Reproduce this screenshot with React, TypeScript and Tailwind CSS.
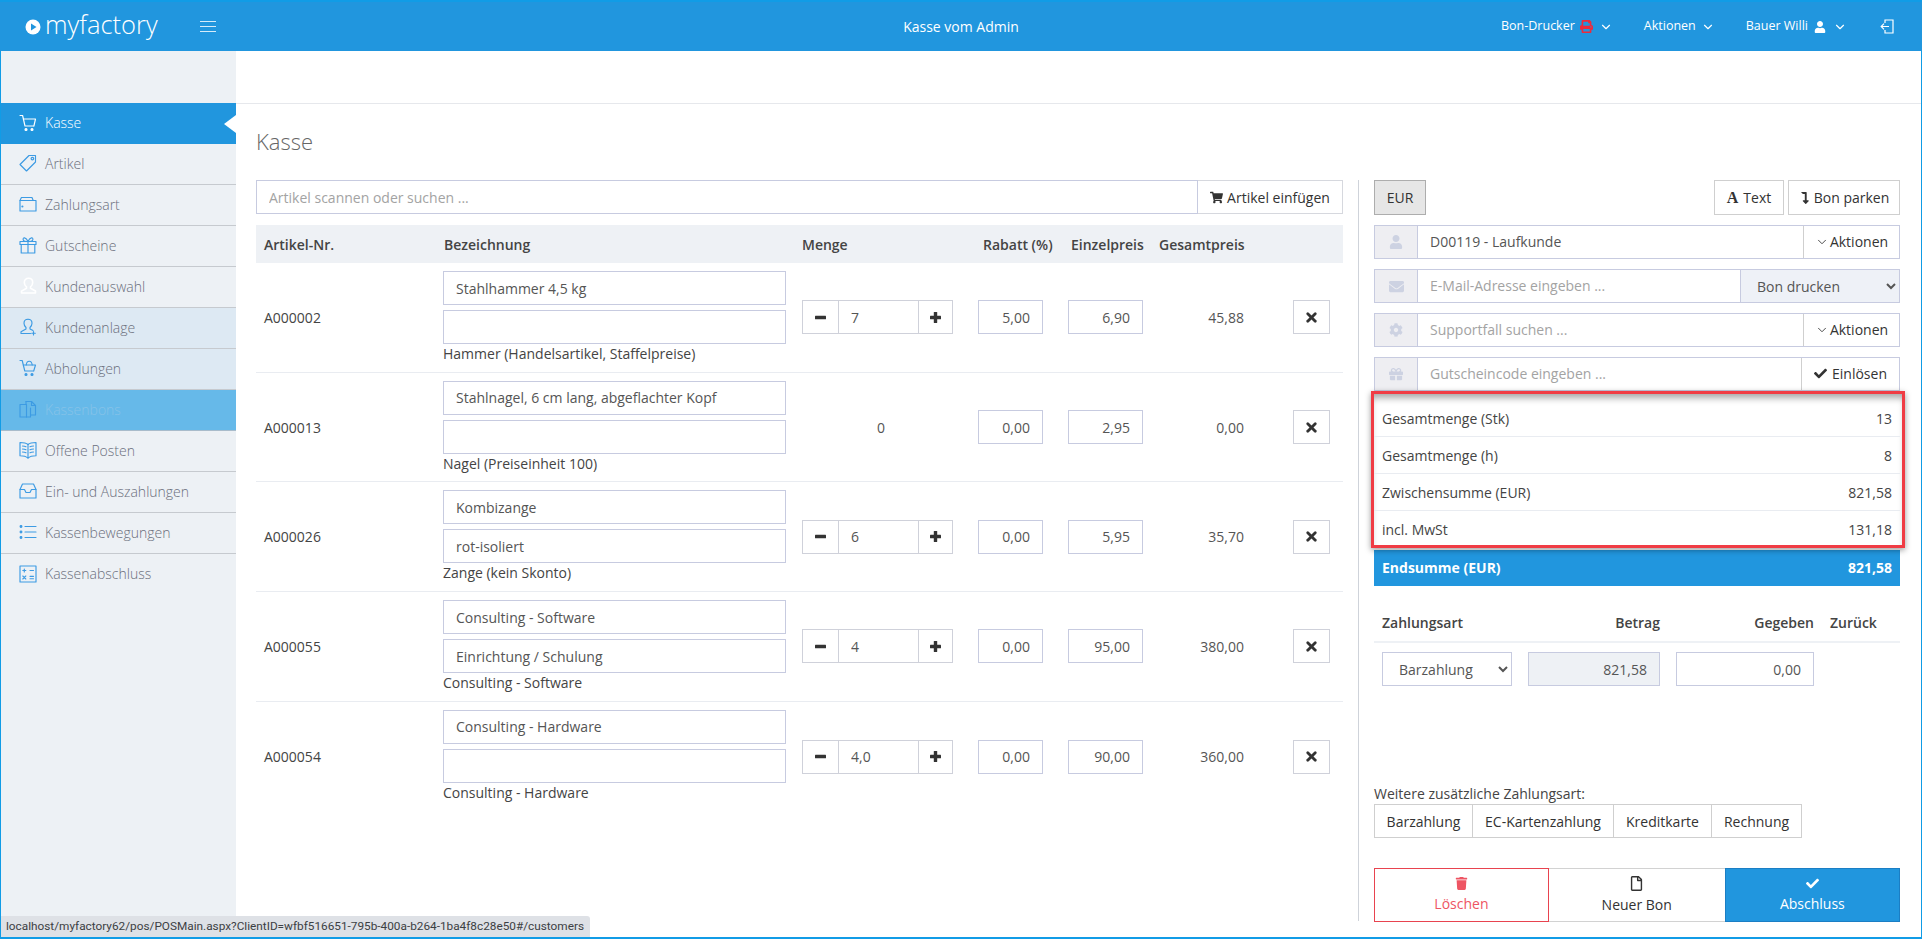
import React from "react";
import {
  FaUser, FaEnvelope, FaCog, FaGift, FaCheck, FaTrash, FaPrint,
  FaRegFile, FaShoppingCart, FaLevelDownAlt,
} from "react-icons/fa";
import { ChevronDown, X } from "lucide-react";

const S = (p: { children: React.ReactNode }) => (
  <svg width="18" height="18" viewBox="0 0 18 18" fill="none" stroke="currentColor" strokeWidth="1.15" strokeLinecap="round" strokeLinejoin="round" className="shrink-0">
    {p.children}
  </svg>
);

const icons: Record<string, React.ReactNode> = {
  cart: <S><path d="M1 1.5h2.6l2.4 10.5h8.6" /><path d="M4.4 5h12.1l-1.6 7" /><circle cx="7" cy="15.5" r="1" fill="currentColor" /><circle cx="13" cy="15.5" r="1" fill="currentColor" /></S>,
  tag: <S><path d="M10 1.5h6.5V8l-9 9L1 10.5z" /><circle cx="13.4" cy="4.6" r="1.3" /></S>,
  wallet: <S><path d="M1 5.5V16h16V5.5z" /><path d="M1 5.5 2.4 2.5H13l1.2 3" /><circle cx="3.4" cy="11.5" r=".5" fill="currentColor" /></S>,
  gift: <S><rect x="1" y="5.5" width="16" height="3" /><path d="M2.2 8.5V17h13.6V8.5M9 5.5V17" /><path d="M9 5.5C7 1 3.5 1 4.2 3.8 4.6 5.2 7 5.5 9 5.5c2 0 4.4-.3 4.8-1.7C14.5 1 11 1 9 5.5z" /></S>,
  users: <S><path d="M9.5 1.2c2.6 0 4.2 1.9 4.2 4.2 0 2-1 3.4-2.2 4.4v1.400l5 2.800V16H2.500v-1.900l5-2.800V9.800c-1.200-1-2.200-2.400-2.200-4.400 0-2.300 1.600-4.200 4.200-4.200z" strokeWidth="1.600" /></S>,
  useradd: <S><path d="M9 1.200c2.500 0 4 1.800 4 4 0 2-1 3.300-2 4.300v1.500l3 1.600" /><path d="M9 1.200c-2.500 0-4 1.800-4 4 0 2 1 3.300 2 4.300v1.500l-5 2.700v1.800h9.500" /><path d="M14.500 13.500v3.500M12.700 15.200h3.600" /></S>,
  basket: <S><path d="M1 1.500h2.200l2.600 10.500h8.500" /><path d="M4.400 6h12.100l-1.800 6" /><path d="M7.200 6c.3-2.500 1.300-3.800 3-3.800s2.700 1.300 3 3.800" /><circle cx="7" cy="15.500" r="1" fill="currentColor" /><circle cx="13" cy="15.500" r="1" fill="currentColor" /></S>,
  files: <S><path d="M1 4.500h6.500V17H1z" /><path d="M7 1.500h5.500l4 4V15H11.500" /><path d="M7 4.500V1.500M12.500 1.500v4h4" /><path d="M7.500 17h4V8" /></S>,
  book: <S><path d="M9 3.500C7 1.800 4 1.500 1 1.500v13.200c3 0 6 .5 8 2.300 2-1.800 5-2.300 8-2.300V1.500c-3 0-6 .3-8 2z" /><path d="M9 3.500V17" /><path d="M3.500 5c1.300 0 2.500.2 3.500.7M3.500 8c1.300 0 2.500.2 3.500.7M3.500 11c1.300 0 2.500.2 3.500.7M14.500 5c-1.300 0-2.500.2-3.500.7M14.500 8c-1.300 0-2.500.2-3.500.7M14.500 11c-1.300 0-2.500.2-3.500.7" /></S>,
  inbox: <S><path d="M1 7.500 3.500 2h11L17 7.500V16H1z" /><path d="M1 7.500h4.500L7 10.500h4l1.500-3H17" /></S>,
  list: <S><path d="M6 3.500h11M6 9h11M6 14.500h11" /><circle cx="2" cy="3.500" r=".9" fill="currentColor" /><circle cx="2" cy="9" r=".9" fill="currentColor" /><circle cx="2" cy="14.500" r=".9" fill="currentColor" /></S>,
  calc: <S><rect x="1" y="1" width="16" height="16" /><path d="M3.800 5.500h3M5.300 4v3M11 5.500h3.500M3.800 11l3 3M6.800 11l-3 3M11 11.300h3.500M11 13.700h3.500" /></S>,
};

const nav = [
  { t: "Kasse", i: "cart", k: "active" },
  { t: "Artikel", i: "tag", k: "" },
  { t: "Zahlungsart", i: "wallet", k: "" },
  { t: "Gutscheine", i: "gift", k: "" },
  { t: "Kundenauswahl", i: "users", k: "white" },
  { t: "Kundenanlage", i: "useradd", k: "tint" },
  { t: "Abholungen", i: "basket", k: "tint" },
  { t: "Kassenbons", i: "files", k: "dim" },
  { t: "Offene Posten", i: "book", k: "" },
  { t: "Ein- und Auszahlungen", i: "inbox", k: "" },
  { t: "Kassenbewegungen", i: "list", k: "" },
  { t: "Kassenabschluss", i: "calc", k: "last" },
];

function NavItem({ t, i, k }: { t: string; i: string; k: string }) {
  const box =
    k === "active"
      ? "bg-[#2196de] text-white h-[41px] relative"
      : k === "tint"
      ? "bg-[#dde9f3] text-[#6b6f7c] h-[41px] border-b border-[#c6cacf]"
      : k === "dim"
      ? "bg-[#66b9e9] text-[#86c3e8] h-[41px] border-b border-[#a9bccb]"
      : k === "last"
      ? "text-[#6b6f7c] h-[41px]"
      : "text-[#6b6f7c] h-[41px] border-b border-[#c6cacf]";
  const ic = k === "active" || k === "white" ? "text-white" : "text-[#3d9be3]";
  return (
    <div className={`flex items-center pb-[2px] pl-[18px] text-[14px] font-light ${box}`}>
      <span className={`${ic} w-[26px]`}>{icons[i]}</span>
      <span>{t}</span>
      {k === "active" && <span className="absolute right-0 top-[12px] w-[12px] h-[18px] bg-white [clip-path:polygon(0_50%,100%_0,100%_100%)]" />}
    </div>
  );
}

const inputCls = "h-[34px] border border-[#c7cbe0] px-[12px] text-[14px] text-[#555] outline-none placeholder:text-[#a3a3a3]";
const btnCls = "flex items-center justify-center border border-[#cfcfcf] bg-white text-[14px] text-[#333]";

const rows = [
  { nr: "A000002", a: "Stahlhammer 4,5 kg", b: "", h: "Hammer (Handelsartikel, Staffelpreise)", q: "7", r: "5,00", e: "6,90", g: "45,88" },
  { nr: "A000013", a: "Stahlnagel, 6 cm lang, abgeflachter Kopf", b: "", h: "Nagel (Preiseinheit 100)", q: null, r: "0,00", e: "2,95", g: "0,00" },
  { nr: "A000026", a: "Kombizange", b: "rot-isoliert", h: "Zange (kein Skonto)", q: "6", r: "0,00", e: "5,95", g: "35,70" },
  { nr: "A000055", a: "Consulting - Software", b: "Einrichtung / Schulung", h: "Consulting - Software", q: "4", r: "0,00", e: "95,00", g: "380,00" },
  { nr: "A000054", a: "Consulting - Hardware", b: "", h: "Consulting - Hardware", q: "4,0", r: "0,00", e: "90,00", g: "360,00" },
];

const MinusIcon = () => (
  <svg width="11" height="11" viewBox="0 0 11 11" fill="#333"><rect x="0" y="3.800" width="11" height="3.400" rx=".5" /></svg>
);
const PlusIcon = () => (
  <svg width="11" height="11" viewBox="0 0 11 11" fill="#333"><rect x="0" y="3.800" width="11" height="3.400" rx=".5" /><rect x="3.800" y="0" width="3.400" height="11" rx=".5" /></svg>
);

function Row({ row, last }: { row: (typeof rows)[number]; last: boolean }) {
  return (
    <div className={`flex h-[109.7px] items-center ${last ? "" : "border-b border-[#e9ecf1]"}`}>
      <div className="w-[187px] pl-[8px] text-[14px] text-[#444]">{row.nr}</div>
      <div className="w-[343px] self-start pt-[8px]">
        <input readOnly value={row.a} className={`${inputCls} block w-full`} />
        <input readOnly value={row.b} className={`${inputCls} block w-full mt-[5px]`} />
        <div className="text-[14px] leading-[20px] text-[#444]">{row.h}</div>
      </div>
      <div className="ml-[16px] w-[151px]">
        {row.q === null ? (
          <div className="pl-[7px] text-center text-[14px] text-[#555]">0</div>
        ) : (
          <div className="flex h-[34px]">
            <div className={`${btnCls} w-[37px] border-[#cfd1da]`}><MinusIcon /></div>
            <input readOnly value={row.q} className="h-[34px] w-[79px] min-w-0 border-y border-[#cfd1da] px-[12px] text-[14px] text-[#555] outline-none" />
            <div className={`${btnCls} w-[35px] border-[#cfd1da]`}><PlusIcon /></div>
          </div>
        )}
      </div>
      <input readOnly value={row.r} className={`${inputCls} ml-[25px] w-[65px] text-right`} />
      <input readOnly value={row.e} className={`${inputCls} ml-[25px] w-[75px] text-right`} />
      <div className="w-[101px] text-right text-[14px] text-[#555]">{row.g}</div>
      <div className={`${btnCls} ml-[49px] h-[34px] w-[37px] border-[#cfd1da]`}><X size={15} strokeWidth={4.5} className="text-[#333]" /></div>
    </div>
  );
}

function Group({ icon, children }: { icon: React.ReactNode; children: React.ReactNode }) {
  return (
    <div className="mt-[10px] flex h-[34px] border border-[#c7cbe0] bg-white">
      <div className="flex w-[43px] shrink-0 items-center justify-center border-r border-[#c7cbe0] bg-[#eeeef2] text-[#cdd2e2]">{icon}</div>
      {children}
    </div>
  );
}

const sum = [
  ["Gesamtmenge (Stk)", "13"],
  ["Gesamtmenge (h)", "8"],
  ["Zwischensumme (EUR)", "821,58"],
  ["incl. MwSt", "131,18"],
];

export default function App() {
  return (
    <div className="relative flex h-[939px] w-[1922px] flex-col overflow-hidden bg-white [font-family:'Open_Sans',sans-serif] text-[14px] text-[#444]">
      <header className="grid h-[51px] shrink-0 grid-cols-[1fr_auto_1fr] items-center border-t-2 border-[#119ce6] bg-[#2196de] text-white">
        <div className="flex items-center pl-[25px]">
          <svg width="16" height="16" viewBox="0 0 16 16" className="shrink-0">
            <circle cx="8" cy="8" r="7.500" fill="#fff" />
            <path d="M6 4.500v7l5.500-3.500z" fill="#2196de" />
          </svg>
          <span className="ml-[4px] w-[108px] -mt-[3px] text-[25.500px] font-light leading-none">myfactory</span>
          <span className="ml-[47px] flex w-[16px] flex-col gap-[4px]">
            <i className="block h-px bg-[#d5ecfa]" />
            <i className="block h-px bg-[#d5ecfa]" />
            <i className="block h-px bg-[#d5ecfa]" />
          </span>
        </div>
        <div className="text-[14px] font-medium">Kasse vom Admin</div>
        <div className="flex items-center justify-end pr-[28px] text-[12.500px]">
          <span>Bon-Drucker</span>
          <FaPrint size={13} className="ml-[5px] text-[#ee2a3c]" />
          <ChevronDown size={14} strokeWidth={2} className="ml-[6px]" />
          <span className="ml-[31px]">Aktionen</span>
          <ChevronDown size={14} strokeWidth={2} className="ml-[5px]" />
          <span className="ml-[31px]">Bauer Willi</span>
          <FaUser size={12} className="ml-[6px]" />
          <ChevronDown size={14} strokeWidth={2} className="ml-[7px]" />
          <svg width="14" height="15" viewBox="0 0 14 15" fill="none" stroke="#fff" strokeWidth="1.200" className="ml-[33px]">
            <path d="M5 4V1h8v13H5v-3" />
            <path d="M9 7.500H1.200M4 4.700 1.200 7.500 4 10.300" />
          </svg>
        </div>
      </header>

      <div className="flex min-h-0 flex-1 border-x border-b-2 border-[#119ce6]">
        <aside className="w-[235px] shrink-0 bg-[#edf1f5] pt-[52px]">
          {nav.map((n) => (
            <NavItem key={n.t} {...n} />
          ))}
        </aside>

        <main className="min-w-0 flex-1">
          <div className="h-[53px] border-b border-[#e6e8ec]" />
          <h1 className="ml-[20px] mt-[20px] text-[22px] font-light leading-[34px] text-[#666]">Kasse</h1>

          <div className="mt-[22px] flex">
            <section className="ml-[20px] w-[1087px]">
              <div className="flex h-[34px]">
                <input placeholder="Artikel scannen oder suchen ..." className={`${inputCls} min-w-0 flex-1`} />
                <div className={`${btnCls} w-[145px] gap-[4px] border-l-0 border-[#d6d8de]`}>
                  <FaShoppingCart size={13} className="text-[#333]" /> Artikel einfügen
                </div>
              </div>
              <div className="mt-[11px] flex h-[38px] items-center bg-[#eef1f5] text-[14px] font-semibold text-[#444]">
                <div className="w-[187px] pl-[8px]">Artikel-Nr.</div>
                <div className="w-[359px] pl-[1px]">Bezeichnung</div>
                <div className="w-[181px]">Menge</div>
                <div className="w-[88px]">Rabatt (%)</div>
                <div className="w-[88px]">Einzelpreis</div>
                <div>Gesamtpreis</div>
              </div>
              {rows.map((r, i) => (
                <Row key={r.nr} row={r} last={i === rows.length - 1} />
              ))}
            </section>

            <section className="ml-[15px] h-[741px] w-[543px] border-l border-[#cfd3da] pl-[15px] pr-[1px]">
              <div className="flex h-[35px] items-stretch">
                <div className="flex w-[52px] items-center justify-center border border-[#adadad] bg-[#e6e6e6] text-[14px] text-[#333]">EUR</div>
                <div className={`${btnCls} ml-auto w-[70px] gap-[5px]`}>
                  <span className="[font-family:'Liberation_Serif',serif] text-[16px] font-bold leading-none">A</span> Text
                </div>
                <div className={`${btnCls} ml-[4px] w-[112px] gap-[3px]`}><FaLevelDownAlt size={12} /> Bon parken</div>
              </div>
              <Group icon={<FaUser size={14} />}>
                <input readOnly value="D00119 - Laufkunde" className="min-w-0 flex-1 px-[12px] pb-[1px] text-[14px] text-[#555] outline-none" />
                <div className="flex w-[96px] items-center justify-center gap-[1px] border-l border-[#cfcfcf] pb-[1px] text-[14px] text-[#333]"><ChevronDown size={14} strokeWidth={1.5} /> Aktionen</div>
              </Group>
              <Group icon={<FaEnvelope size={15} />}>
                <input placeholder="E-Mail-Adresse eingeben ..." className="min-w-0 flex-1 px-[12px] pb-[1px] text-[14px] outline-none placeholder:text-[#a3a3a3]" />
                <select defaultValue="Bon drucken" className="w-[159px] border-l border-[#c7cbe0] bg-[#eef1f7] pl-[12px] text-[14px] text-[#555] outline-none">
                  <option>Bon drucken</option>
                </select>
              </Group>
              <Group icon={<FaCog size={14} />}>
                <input placeholder="Supportfall suchen ..." className="min-w-0 flex-1 px-[12px] pb-[1px] text-[14px] outline-none placeholder:text-[#a3a3a3]" />
                <div className="flex w-[96px] items-center justify-center gap-[1px] border-l border-[#cfcfcf] pb-[1px] text-[14px] text-[#333]"><ChevronDown size={14} strokeWidth={1.5} /> Aktionen</div>
              </Group>
              <Group icon={<FaGift size={14} />}>
                <input placeholder="Gutscheincode eingeben ..." className="min-w-0 flex-1 px-[12px] pb-[1px] text-[14px] outline-none placeholder:text-[#a3a3a3]" />
                <div className="flex w-[98px] items-center justify-center gap-[5px] border-l border-[#cfcfcf] pb-[1px] text-[14px] text-[#333]"><FaCheck size={13} /> Einlösen</div>
              </Group>

              <div className="relative z-10 -ml-[3px] -mr-[5px] h-[157px] overflow-hidden border-[3px] border-[#f03c44] bg-white pr-[2px] pt-[6px] shadow-[0_2px_6px_rgba(0,0,0,0.4),inset_0_7px_7px_-3px_rgba(0,0,0,0.35)]">
                {sum.map(([l, v], i) => (
                  <div key={l} className={`flex h-[37px] items-center justify-between px-[8px] text-[14px] text-[#444] ${i < 3 ? "border-b border-[#e9ecf1]" : ""}`}>
                    <span>{l}</span>
                    <span>{v}</span>
                  </div>
                ))}
              </div>
              <div className="mt-[2px] flex h-[36px] items-center justify-between bg-[#2196de] px-[8px] pb-[1px] text-[14px] font-bold text-white">
                <span>Endsumme (EUR)</span>
                <span>821,58</span>
              </div>

              <div className="mt-[28px] flex h-[29px] items-center border-b-2 border-[#eef1f5] pb-[10px] pl-[8px] text-[14px] font-semibold text-[#444]">
                <span className="w-[200px]">Zahlungsart</span>
                <span className="w-[78px] text-right">Betrag</span>
                <span className="w-[154px] text-right">Gegeben</span>
                <span className="ml-[16px]">Zurück</span>
              </div>
              <div className="mt-[9px] flex pl-[8px]">
                <select defaultValue="Barzahlung" className="h-[34px] w-[130px] border border-[#c7cbe0] bg-white pl-[12px] text-[14px] text-[#555] outline-none">
                  <option>Barzahlung</option>
                </select>
                <input readOnly value="821,58" className={`${inputCls} ml-[16px] w-[132px] bg-[#eef1f5] text-right`} />
                <input readOnly value="0,00" className={`${inputCls} ml-[16px] w-[138px] text-right`} />
              </div>

              <div className="mt-[98px] text-[14px] leading-[20px] text-[#444]">Weitere zusätzliche Zahlungsart:</div>
              <div className="flex h-[34px] w-[428px] border border-[#cfcfcf]">
                <div className="flex w-[98px] items-center justify-center border-r border-[#cfcfcf] text-[#333]">Barzahlung</div>
                <div className="flex w-[141px] items-center justify-center border-r border-[#cfcfcf] text-[#333]">EC-Kartenzahlung</div>
                <div className="flex w-[98px] items-center justify-center border-r border-[#cfcfcf] text-[#333]">Kreditkarte</div>
                <div className="flex flex-1 items-center justify-center text-[#333]">Rechnung</div>
              </div>

              <div className="mt-[30px] flex h-[54px]">
                <div className="flex w-[175px] flex-col items-center justify-center gap-[4px] border border-[#e8434f] text-[14px] leading-[20px] text-[#ee5563]">
                  <FaTrash size={13} /> Löschen
                </div>
                <div className="flex w-[176px] flex-col items-center justify-center gap-[4px] border-y border-[#d2d2d2] text-[14px] leading-[20px] text-[#333]">
                  <FaRegFile size={15} /> Neuer Bon
                </div>
                <div className="flex w-[175.500px] flex-col items-center justify-center gap-[4px] border border-[#1b7ec4] bg-[#2196de] text-[14px] leading-[20px] text-white">
                  <FaCheck size={13} /> Abschluss
                </div>
              </div>
            </section>
          </div>
        </main>
      </div>

      <div className="absolute bottom-[2px] left-[1px] z-20 flex h-[21px] w-[589px] items-center whitespace-nowrap rounded-tr-[3px] bg-[#dee1e6] pl-[5px] [font-family:Roboto,sans-serif] text-[11.800px] text-[#3c4043]">
        localhost/myfactory62/pos/POSMain.aspx?ClientID=wfbf516651-795b-400a-b264-1ba4f8c28e50#/customers
      </div>
    </div>
  );
}
